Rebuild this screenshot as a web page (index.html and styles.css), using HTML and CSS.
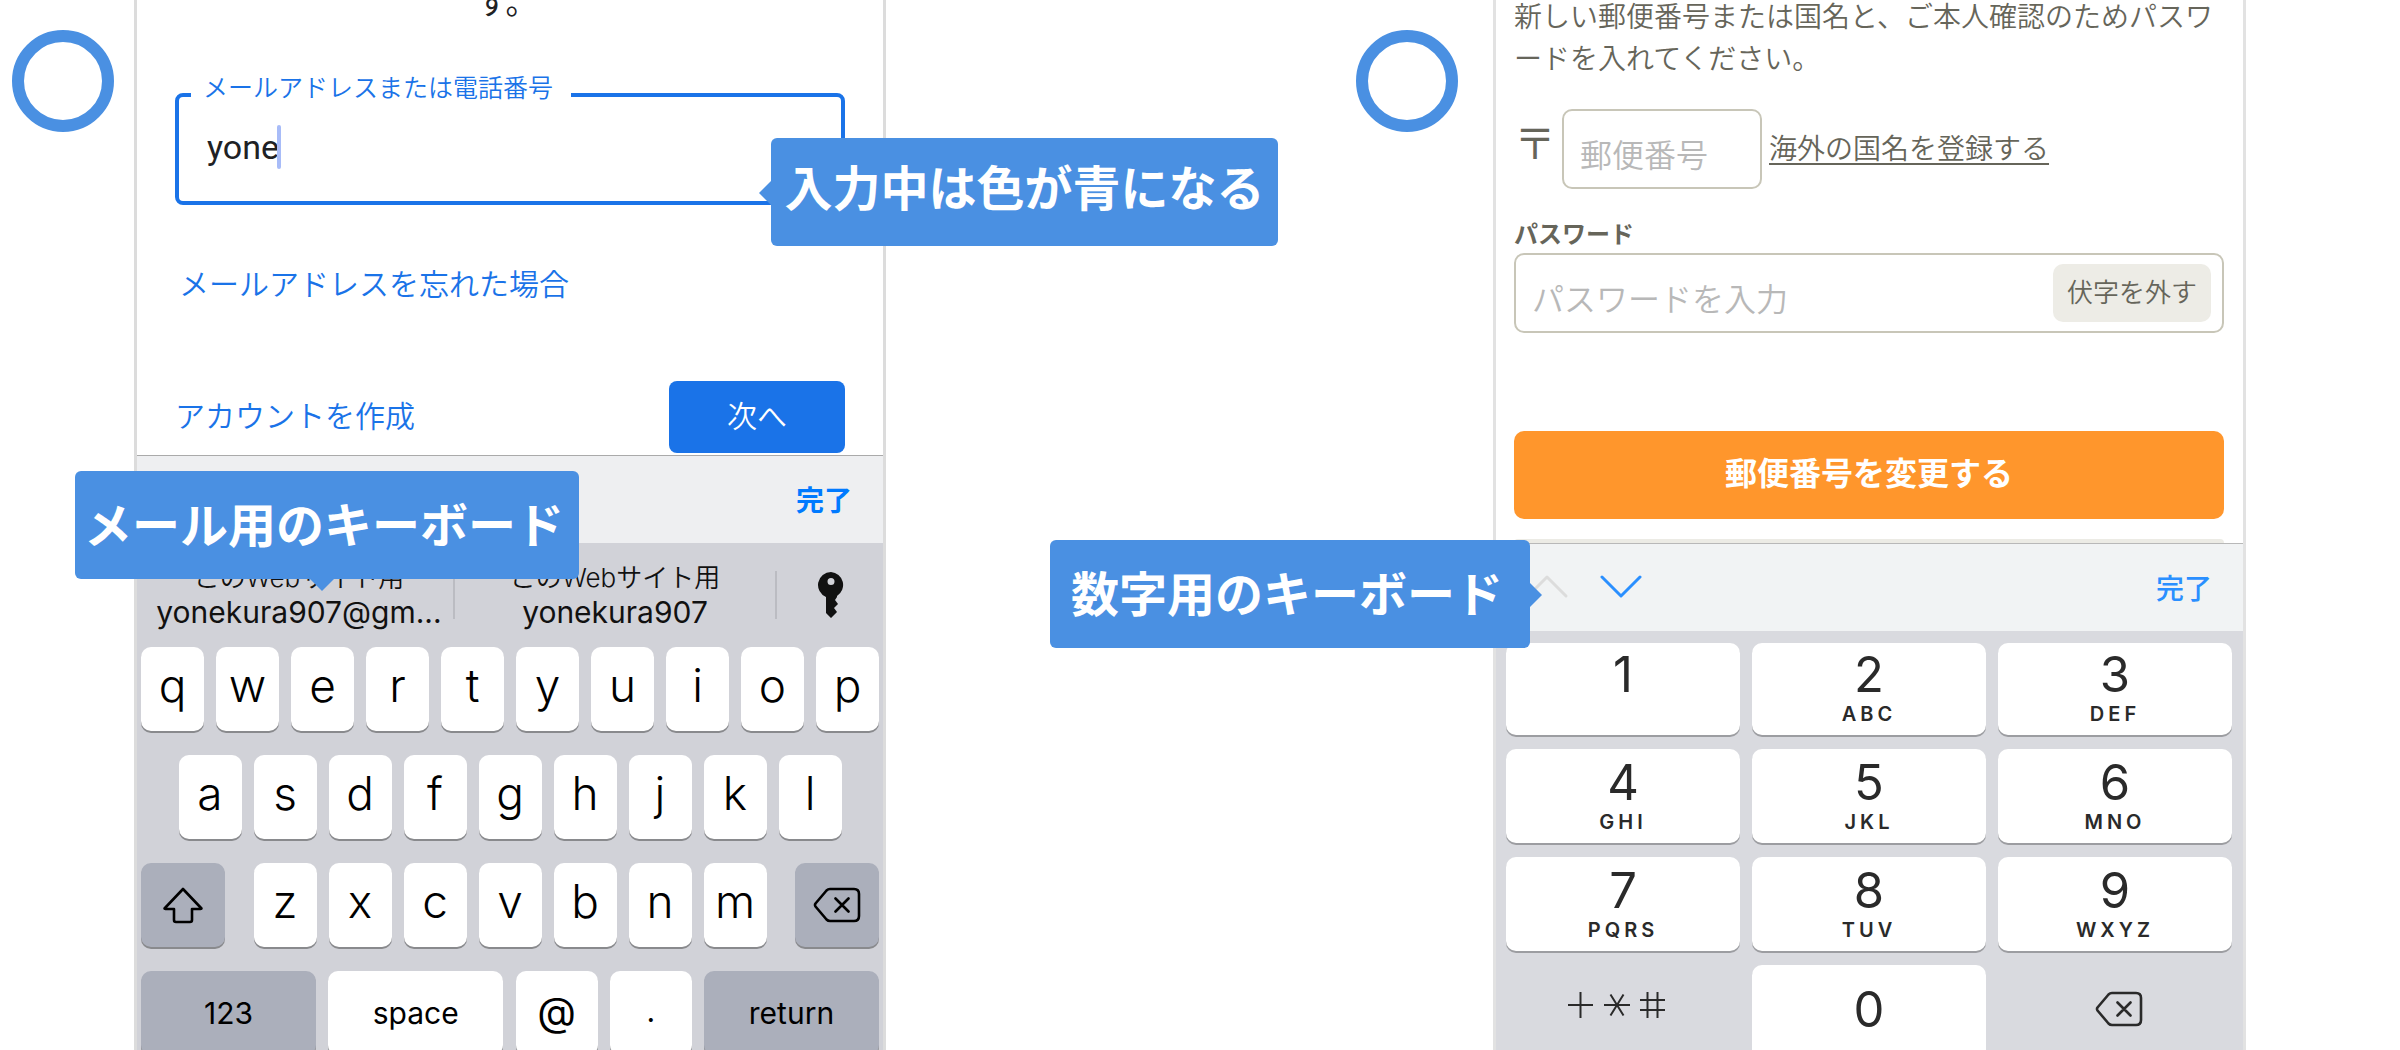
FILE: index.html
```html
<!DOCTYPE html>
<html lang="ja">
<head>
<meta charset="utf-8">
<meta name="viewport" content="width=device-width, initial-scale=1">
<title>入力フォームとキーボード</title>
<link rel="stylesheet" href="styles.css">
</head>
<body>
<main class="examples">
  <section class="example">
    <span class="ring" role="img" aria-label="良い例"></span>
    <div class="phone">
      <form class="signin">
        <p class="signin-lead">す。</p>
        <div class="field">
          <label class="field-label" for="email">メールアドレスまたは電話番号</label>
          <input class="field-input" id="email" type="text" value="yone">
          <span class="caret"></span>
        </div>
        <a class="link" href="#">メールアドレスを忘れた場合</a>
        <div class="actions">
          <a class="link" href="#">アカウントを作成</a>
          <button class="next" type="button">次へ</button>
        </div>
      </form>
      <div class="toolbar">
        <button class="done" type="button">完了</button>
      </div>
      <div class="keyboard">
        <div class="suggestions">
          <button class="suggestion" type="button"><span class="suggestion-site">このWebサイト用</span><span>yonekura907@gm...</span></button>
          <button class="suggestion" type="button"><span class="suggestion-site">このWebサイト用</span><span>yonekura907</span></button>
          <button class="suggestion suggestion-key" type="button" aria-label="パスワード">
            <svg width="28" height="48" viewBox="0 0 28 48"><path fill="#111" fill-rule="evenodd" d="M14 1a13 13 0 0 0-5 25v16l5 5 6-6-3-4 4-4-3-4 2-3v-1A13 13 0 0 0 14 1zm0 6a3.500 3.500 0 1 1 0 7 3.500 3.500 0 0 1 0-7z"/></svg>
          </button>
        </div>
        <div class="key-row">
          <button class="key" type="button">q</button><button class="key" type="button">w</button><button class="key" type="button">e</button><button class="key" type="button">r</button><button class="key" type="button">t</button><button class="key" type="button">y</button><button class="key" type="button">u</button><button class="key" type="button">i</button><button class="key" type="button">o</button><button class="key" type="button">p</button>
        </div>
        <div class="key-row">
          <button class="key" type="button">a</button><button class="key" type="button">s</button><button class="key" type="button">d</button><button class="key" type="button">f</button><button class="key" type="button">g</button><button class="key" type="button">h</button><button class="key" type="button">j</button><button class="key" type="button">k</button><button class="key" type="button">l</button>
        </div>
        <div class="key-row key-row-spread">
          <button class="key key-gray key-side" type="button" aria-label="shift">
            <svg width="42" height="38" viewBox="0 0 42 38"><path fill="none" stroke="#000" stroke-width="2.600" stroke-linejoin="round" d="M21 3 L39.500 22.500 Q39.500 23 38.500 23 H30 V34 Q30 36 28 36 H14 Q12 36 12 34 V23 H3.500 Q2.500 23 2.500 22.500 Z"/></svg>
          </button>
          <div class="key-group">
            <button class="key" type="button">z</button><button class="key" type="button">x</button><button class="key" type="button">c</button><button class="key" type="button">v</button><button class="key" type="button">b</button><button class="key" type="button">n</button><button class="key" type="button">m</button>
          </div>
          <button class="key key-gray key-side" type="button" aria-label="delete">
            <svg width="48" height="36" viewBox="0 0 48 36"><path fill="none" stroke="#000" stroke-width="2.600" stroke-linecap="round" stroke-linejoin="round" d="M17 2H41Q46 2 46 7V29Q46 34 41 34H17Q15 34 13.500 32.500L2.500 19.500Q1.500 18 2.500 16.500L13.500 3.500Q15 2 17 2ZM22.500 11.500L35.500 24.500M35.500 11.500L22.500 24.500"/></svg>
          </button>
        </div>
        <div class="key-row key-row-spread">
          <button class="key key-gray key-wide" type="button">123</button>
          <button class="key key-wide" type="button">space</button>
          <button class="key key-symbol" type="button">@</button>
          <button class="key key-symbol key-dot" type="button">.</button>
          <button class="key key-gray key-wide" type="button">return</button>
        </div>
      </div>
      <p class="callout callout-focus">入力中は色が青になる</p>
      <p class="callout callout-mail">メール用のキーボード</p>
    </div>
  </section>

  <section class="example">
    <span class="ring" role="img" aria-label="良い例"></span>
    <div class="phone phone-zip">
      <form class="zip-form">
        <p class="zip-lead">新しい郵便番号または国名と、ご本人確認のためパスワ<br>ードを入れてください。</p>
        <div class="zip-row">
          <label class="zip-mark" for="zip">〒</label>
          <input class="box zip-input" id="zip" type="text" placeholder="郵便番号">
          <a class="zip-link" href="#">海外の国名を登録する</a>
        </div>
        <label class="password-label" for="password">パスワード</label>
        <div class="box password-box">
          <input class="password-input" id="password" type="password" placeholder="パスワードを入力">
          <button class="reveal" type="button">伏字を外す</button>
        </div>
        <button class="submit" type="button">郵便番号を変更する</button>
        <div class="next-card"></div>
      </form>
      <div class="toolbar toolbar-zip">
        <svg class="arrows" width="122" height="28" viewBox="0 0 122 28" fill="none" stroke-width="3" stroke-linecap="round" stroke-linejoin="round"><path stroke="#dcdcdc" d="M8 23 27 4 46 23"/><path stroke="#2a8fff" d="M82 4 101 23 120 4"/></svg>
        <button class="done" type="button">完了</button>
      </div>
      <div class="keypad">
        <button class="num" type="button"><span>1</span><small class="num-letters"></small></button>
        <button class="num" type="button"><span>2</span><small class="num-letters">ABC</small></button>
        <button class="num" type="button"><span>3</span><small class="num-letters">DEF</small></button>
        <button class="num" type="button"><span>4</span><small class="num-letters">GHI</small></button>
        <button class="num" type="button"><span>5</span><small class="num-letters">JKL</small></button>
        <button class="num" type="button"><span>6</span><small class="num-letters">MNO</small></button>
        <button class="num" type="button"><span>7</span><small class="num-letters">PQRS</small></button>
        <button class="num" type="button"><span>8</span><small class="num-letters">TUV</small></button>
        <button class="num" type="button"><span>9</span><small class="num-letters">WXYZ</small></button>
        <button class="num num-plain num-marks" type="button" aria-label="+*#">
          <svg width="98" height="26" viewBox="0 0 98 26" fill="none" stroke="#2a2a2a" stroke-width="2"><path d="M0 13H25M12.500 0V26M36 13H62M42.500 2.500 55.500 23.500M55.500 2.500 42.500 23.500M72 8H97M72 18H97M79.500 0V26M89.500 0V26"/></svg>
        </button>
        <button class="num num-zero" type="button"><span>0</span></button>
        <button class="num num-plain num-delete" type="button" aria-label="delete">
          <svg width="48" height="36" viewBox="0 0 48 36"><path fill="none" stroke="#2a2a2a" stroke-width="2.600" stroke-linecap="round" stroke-linejoin="round" d="M17 2H41Q46 2 46 7V29Q46 34 41 34H17Q15 34 13.500 32.500L2.500 19.500Q1.500 18 2.500 16.500L13.500 3.500Q15 2 17 2ZM22.500 11.500L35.500 24.500M35.500 11.500L22.500 24.500"/></svg>
        </button>
      </div>
      <p class="callout callout-number">数字用のキーボード</p>
    </div>
  </section>
</main>
</body>
</html>
```
FILE: styles.css
```css
* {
  box-sizing: border-box;
}

body {
  margin: 0;
  background: #fff;
  font-family: "Noto Sans CJK JP", "Noto Sans", sans-serif;
  font-size: 28px;
  font-weight: 350;
}

p {
  margin: 0;
}

button {
  border: 0;
  padding: 0;
  background: none;
  color: inherit;
  font: inherit;
}

svg {
  display: block;
}

.examples {
  display: grid;
  grid-template-columns: 56% 44%;
  height: 100vh;
  overflow: hidden;
}

.example {
  display: flex;
  align-items: flex-start;
  gap: 20px;
  padding-left: 12px;
}

.example + .example {
  gap: 35px;
}

.ring {
  flex: none;
  width: 102px;
  height: 102px;
  margin-top: 30px;
  border: 12px solid #4a90e2;
  border-radius: 50%;
}

.phone {
  position: relative;
  flex: none;
  width: 752px;
  border: solid #dcdcdc;
  border-width: 0 3px;
}

.phone-zip {
  width: 753px;
  border-color: #e2e2e2;
}

/* sign-in form */

.signin {
  padding: 0 38px 2px;
  font-size: 30px;
  line-height: 40px;
}

.signin-lead {
  margin-top: -20px;
  padding-right: 6px;
  color: #202124;
  font-size: 32px;
  font-weight: 400;
  text-align: center;
}

.field {
  position: relative;
  display: flex;
  align-items: center;
  height: 112px;
  margin-top: 73px;
  padding: 0 0 4px 28px;
  border: 4px solid #1a73e8;
  border-radius: 8px;
}

.field-label {
  position: absolute;
  top: -31px;
  left: 12px;
  padding: 0 18px 0 12px;
  background: #fff;
  color: #1a73e8;
  font-size: 25px;
}

.field-input {
  field-sizing: content;
  border: 0;
  padding: 0;
  outline: 0;
  background: none;
  color: #202124;
  font-family: Roboto, sans-serif;
  font-size: 34px;
  font-weight: 400;
}

.caret {
  width: 4px;
  height: 44px;
  margin-left: -2px;
  border-radius: 2px;
  background: #a8bcf8;
}

.link {
  color: #1a73e8;
  text-decoration: none;
}

.signin > .link {
  display: block;
  margin-top: 57px;
  padding-left: 4px;
}

.actions {
  display: flex;
  align-items: center;
  justify-content: space-between;
  margin-top: 79px;
}

.actions .link {
  padding-bottom: 6px;
}

.next {
  width: 176px;
  height: 72px;
  padding-bottom: 6px;
  border-radius: 8px;
  background: #1a73e8;
  color: #fff;
}

/* bar above a keyboard */

.toolbar {
  display: flex;
  align-items: center;
  justify-content: flex-end;
  height: 88px;
  padding: 0 31px 2px;
  border-top: 1px solid #aaa;
  background: #eeeff1;
}

.toolbar-zip {
  justify-content: space-between;
  border-color: #b8b8b8;
  background: #f1f3f4;
}

.arrows {
  margin-left: -7px;
}

.done {
  color: #007aff;
  font-weight: 700;
}

.toolbar-zip .done {
  color: #2a8fff;
  font-weight: 500;
}

/* letter keyboard */

.keyboard {
  display: grid;
  gap: 24px;
  padding: 0 4px;
  background: #d1d2d8;
}

.suggestions {
  display: grid;
  grid-template-columns: 312px 322px 1fr;
  align-items: center;
  height: 80px;
  padding-top: 24px;
  color: #111;
  font-family: Inter, "Noto Sans CJK JP", sans-serif;
  font-size: 30px;
  font-weight: 400;
  line-height: 34px;
}

.suggestion {
  display: grid;
  place-content: center;
  height: 48px;
  border-left: 2px solid #bbbcc2;
}

.suggestion:first-child {
  padding-left: 4px;
  border-left: 0;
}

.suggestion-key {
  padding-left: 5px;
}

.suggestion-site {
  font-size: 26px;
  font-weight: 350;
}

.key-row,
.key-group {
  display: flex;
  justify-content: center;
  gap: 12px;
}

.key-row-spread {
  justify-content: space-between;
}

.key {
  display: grid;
  place-items: center;
  width: 63px;
  height: 84px;
  padding-bottom: 8px;
  border-radius: 10px;
  background: #fff;
  box-shadow: 0 2px #898a8d;
  color: #000;
  font-family: Inter, sans-serif;
  font-size: 46px;
}

.key-gray {
  background: #abafbb;
}

.key-side {
  width: 84px;
  padding: 0;
}

.key-wide {
  width: 175px;
  padding: 0;
  font-size: 30px;
  font-weight: 400;
}

.key-symbol {
  width: 82px;
  padding: 0 0 4px;
  font-size: 40px;
  font-weight: 400;
}

.key-dot {
  font-size: 30px;
}

/* postcode form */

.zip-form {
  padding: 0 19px 0 18px;
  color: #66655a;
}

.zip-lead {
  margin-top: -6px;
  line-height: 42px;
}

.zip-row {
  display: flex;
  align-items: center;
  height: 80px;
  margin-top: 31px;
}

.zip-mark {
  width: 48px;
  padding-bottom: 16px;
  font-size: 42px;
  line-height: 48px;
}

.box {
  height: 80px;
  border: 2px solid #c8c6b8;
  border-radius: 10px;
  background: #fff;
}

.zip-input,
.password-input {
  padding: 8px 0 0 16px;
  outline: 0;
  font: inherit;
  font-size: 32px;
}

.zip-input {
  width: 200px;
  margin-right: 7px;
}

.zip-input::placeholder,
.password-input::placeholder {
  color: #b8b8b8;
}

.zip-link {
  padding-bottom: 4px;
  color: inherit;
  text-underline-offset: 4px;
}

.password-label {
  display: block;
  margin-top: 26px;
  margin-bottom: 2px;
  font-size: 24px;
  font-weight: 700;
  line-height: 36px;
}

.password-box {
  display: flex;
  align-items: center;
  padding-right: 11px;
}

.password-input {
  flex: 1;
  min-width: 0;
  height: 76px;
  border: 0;
  background: none;
}

.reveal {
  width: 158px;
  height: 58px;
  padding-bottom: 6px;
  border-radius: 10px;
  background: #edece6;
  font-size: 26px;
}

.submit {
  display: block;
  width: 100%;
  height: 88px;
  margin-top: 98px;
  padding-bottom: 8px;
  border-radius: 10px;
  background: #ff962c;
  color: #fff;
  font-size: 32px;
  font-weight: 700;
}

.next-card {
  height: 4px;
  margin-top: 20px;
  border-radius: 6px 6px 0 0;
  background: #ecebe5;
}

/* number keypad */

.keypad {
  display: grid;
  grid-template-columns: repeat(3, 1fr);
  grid-template-rows: 92px 94px 94px 94px;
  gap: 14px 12px;
  padding: 12px 11px 12px 10px;
  background: #d9dadf;
  color: #2a2a2a;
  font-family: Inter, sans-serif;
  font-weight: 400;
}

.num {
  display: flex;
  flex-direction: column;
  align-items: center;
  justify-content: flex-end;
  padding-bottom: 7px;
  border-radius: 10px;
  background: #fff;
  box-shadow: 0 2px #9c9da1;
  font-size: 49px;
  line-height: 50px;
}

.num-letters {
  height: 28px;
  font-size: 20px;
  font-weight: 600;
  letter-spacing: 4px;
  line-height: 28px;
}

.num-plain {
  justify-content: center;
  padding: 0;
  background: none;
  box-shadow: none;
}

.num-marks {
  padding: 0 12px 14px 0;
}

.num-delete {
  padding: 0 0 6px 8px;
}

.num-zero {
  justify-content: center;
  padding-bottom: 4px;
}

/* callouts laid over the phones */

.callout {
  position: absolute;
  height: 108px;
  padding-right: 6px;
  border-radius: 6px;
  background: #4a90e2;
  color: #fff;
  font-size: 48px;
  font-weight: 700;
  line-height: 102px;
  text-align: center;
  white-space: nowrap;
}

.callout::after {
  content: "";
  position: absolute;
  border: 12px solid transparent;
}

.callout-focus {
  top: 138px;
  left: 634px;
  width: 507px;
  padding: 0;
  line-height: 94px;
}

.callout-focus::after {
  top: 43px;
  right: 100%;
  border-left: 0;
  border-right-color: #4a90e2;
}

.callout-mail {
  top: 471px;
  left: -62px;
  width: 504px;
}

.callout-mail::after {
  top: 100%;
  left: 235px;
  border-bottom: 0;
  border-top-color: #4a90e2;
}

.callout-number {
  top: 540px;
  left: -446px;
  width: 480px;
}

.callout-number::after {
  top: 43px;
  left: 100%;
  border-right: 0;
  border-left-color: #4a90e2;
}
```
